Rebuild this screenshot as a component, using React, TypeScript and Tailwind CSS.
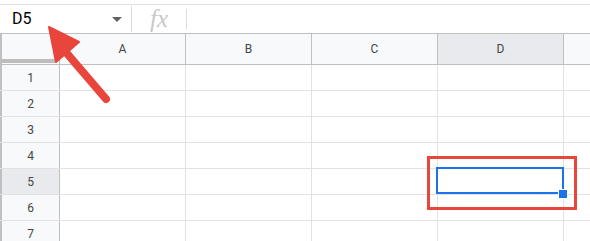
const cols = ["A", "B", "C", "D"];
const rows = [1, 2, 3, 4, 5, 6, 7];

const font = { fontFamily: "Roboto, Arial, sans-serif" };

export default function App() {
  return (
    <div className="relative w-[590px] h-[241px] overflow-hidden bg-white" style={font}>
      {/* Formula bar */}
      <div className="mt-[4px] h-[29px] flex items-stretch border-t border-[#e0e0e0]">
        <div className="w-[131px] flex items-center pl-[12px] pr-[9px] justify-between">
          <span className="text-[16px] text-black leading-none">D5</span>
          <svg width="10" height="5" viewBox="0 0 10 5">
            <path d="M0 0 L10 0 L5 5 Z" fill="#5f6368" />
          </svg>
        </div>
        <div className="w-px my-[1px] bg-[#dadce0]" />
        <div className="w-[54px] flex items-center justify-center">
          <span
            className="text-[25px] italic text-[#c8c8c8] leading-none -mt-[2px]"
            style={{ fontFamily: '"Liberation Serif", serif' }}
          >
            fx
          </span>
        </div>
        <div className="w-px my-[4px] bg-[#dadce0]" />
        <div className="flex-1" />
      </div>

      {/* Grid */}
      <div className="border-t border-[#c0c0c0]">
        <div className="flex h-[31px] border-b border-[#c0c0c0]">
          <div className="relative w-[60px] shrink-0 bg-[#f8f9fa] border-l-[2px] border-l-[#c0c0c0] border-r border-[#c0c0c0]">
            <div className="absolute left-0 right-[4px] bottom-[1px] h-[4px] bg-[#bdbdbd]" />
          </div>
          {cols.map((c) => (
            <div
              key={c}
              className={`w-[126px] shrink-0 flex items-center justify-center text-[12px] text-[#444746] border-r border-[#c0c0c0] ${
                c === "D" ? "bg-[#e8eaed]" : "bg-[#f8f9fa]"
              }`}
            >
              {c}
            </div>
          ))}
          <div className="flex-1 bg-[#f8f9fa]" />
        </div>
        {rows.map((r) => (
          <div key={r} className="flex h-[26px] border-b border-[#e2e2e2]">
            <div
              className={`w-[60px] shrink-0 flex items-center justify-center text-[12px] text-[#444746] border-l-[2px] border-l-[#c0c0c0] border-r border-r-[#c0c0c0] ${
                r === 5 ? "bg-[#e8eaed]" : "bg-[#f8f9fa]"
              }`}
            >
              {r}
            </div>
            {cols.map((c) => (
              <div key={c} className="w-[126px] shrink-0 border-r border-[#e2e2e2]" />
            ))}
            <div className="flex-1" />
          </div>
        ))}
      </div>

      {/* Selected cell D5 */}
      <div className="absolute left-[436px] top-[167px] w-[128px] h-[27px] border-2 border-[#1a73e8]" />
      <div className="absolute left-[558px] top-[189px] w-[8px] h-[8px] bg-[#1a73e8] border border-white box-content" />

      {/* Red highlight box */}
      <div className="absolute left-[427px] top-[156px] w-[150px] h-[54px] border-[3px] border-[#e8453c]" />

      {/* Red arrow */}
      <svg className="absolute left-0 top-0" width="140" height="110" viewBox="0 0 140 110">
        <line x1="106" y1="99" x2="64" y2="50" stroke="#e8453c" strokeWidth="8" strokeLinecap="round" />
        <path d="M49 27 L79 42 L56 62 Z" fill="#e8453c" stroke="#e8453c" strokeWidth="2" strokeLinejoin="round" />
      </svg>
    </div>
  );
}
